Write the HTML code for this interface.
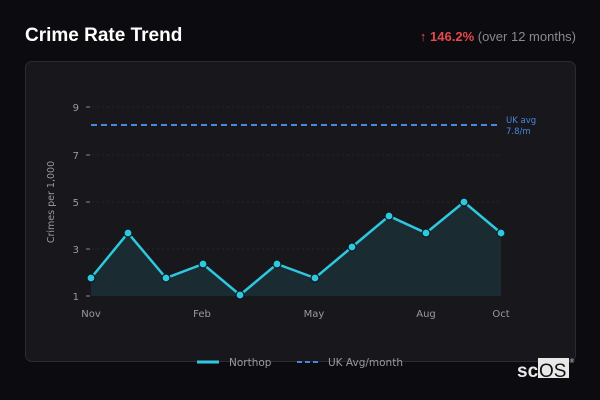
<!DOCTYPE html><html><head><style>
body{margin:0;width:600px;height:400px;background:#0c0b0f;overflow:hidden;font-family:"DejaVu Sans","Liberation Sans",sans-serif;position:relative}
.t{position:absolute;left:25px;top:25px;color:#fff;font-weight:bold;font-size:19px;font-family:"Liberation Sans",sans-serif}
.r{position:absolute;right:24px;top:29px;font-size:13px;color:#8a8990;font-family:"Liberation Sans",sans-serif}
.r b{color:#e5484d}
.p{position:absolute;left:25px;top:61px;width:549px;height:299px;background:#18171b;border:1px solid #2c2b31;border-radius:7px}
</style></head><body>
<div class="t">Crime Rate Trend</div>
<div class="r"><b>↑ 146.2%</b> (over 12 months)</div>
<div class="p"></div>
<svg width="600" height="400" style="position:absolute;left:0;top:0" font-family="DejaVu Sans, Liberation Sans, sans-serif">
<g stroke="#26252b" stroke-dasharray="2,3" stroke-width="1">
<line x1="92" y1="107" x2="500" y2="107"/><line x1="92" y1="155" x2="500" y2="155"/><line x1="92" y1="202" x2="500" y2="202"/><line x1="92" y1="249" x2="500" y2="249"/>
</g>
<g stroke="#888" stroke-width="1"><line x1="86" y1="107" x2="90" y2="107"/><line x1="86" y1="155" x2="90" y2="155"/><line x1="86" y1="202" x2="90" y2="202"/><line x1="86" y1="249" x2="90" y2="249"/><line x1="86" y1="296" x2="90" y2="296"/></g>
<g fill="#9a99a0" font-size="10" text-anchor="end"><text x="79" y="111">9</text><text x="79" y="159">7</text><text x="79" y="206">5</text><text x="79" y="253">3</text><text x="79" y="300">1</text></g>
<text transform="translate(54,202) rotate(-90)" fill="#9a99a0" font-size="9.5" text-anchor="middle">Crimes per 1,000</text>
<g fill="#9a99a0" font-size="10" text-anchor="middle"><text x="91" y="317">Nov</text><text x="202" y="317">Feb</text><text x="314" y="317">May</text><text x="426" y="317">Aug</text><text x="501" y="317">Oct</text></g>
<line x1="91" y1="125" x2="500" y2="125" stroke="#4a86e0" stroke-width="2" stroke-dasharray="6,4"/>
<text x="506" y="123" fill="#4a86e0" font-size="8.5">UK avg</text><text x="506" y="134" fill="#4a86e0" font-size="8.5">7.8/m</text>
<path d="M91,278 L128,233 L166,278 L203,264 L240,295 L277,264 L315,278 L352,247 L389,216 L426,233 L464,202 L501,233 L501,296 L91,296Z" fill="#1a2c32"/>
<polyline points="91,278 128,233 166,278 203,264 240,295 277,264 315,278 352,247 389,216 426,233 464,202 501,233" fill="none" stroke="#2ec8e0" stroke-width="2.5"/>
<g fill="#2ec8e0" stroke="#0e1a1e" stroke-width="1.2"><circle cx="91" cy="278" r="4"/><circle cx="128" cy="233" r="4"/><circle cx="166" cy="278" r="4"/><circle cx="203" cy="264" r="4"/><circle cx="240" cy="295" r="4"/><circle cx="277" cy="264" r="4"/><circle cx="315" cy="278" r="4"/><circle cx="352" cy="247" r="4"/><circle cx="389" cy="216" r="4"/><circle cx="426" cy="233" r="4"/><circle cx="464" cy="202" r="4"/><circle cx="501" cy="233" r="4"/></g>
<line x1="197" y1="362" x2="219" y2="362" stroke="#2ec8e0" stroke-width="3"/>
<line x1="297" y1="362" x2="321" y2="362" stroke="#4a86e0" stroke-width="2" stroke-dasharray="5,3"/>
<text x="229" y="366" fill="#9a99a0" font-size="10.5">Northop</text>
<text x="328" y="366" fill="#9a99a0" font-size="10.5">UK Avg/month</text>
<rect x="538" y="358" width="31" height="20" fill="#e8e8e8"/>
<text x="517" y="377" fill="#e8e8e8" font-size="19" font-weight="bold" font-family="Liberation Sans, sans-serif">sc</text>
<text x="539" y="377" fill="#111" font-size="19" font-family="Liberation Sans, sans-serif">OS</text>
<text x="569" y="363" fill="#ccc" font-size="6">®</text>
</svg>
</body></html>
